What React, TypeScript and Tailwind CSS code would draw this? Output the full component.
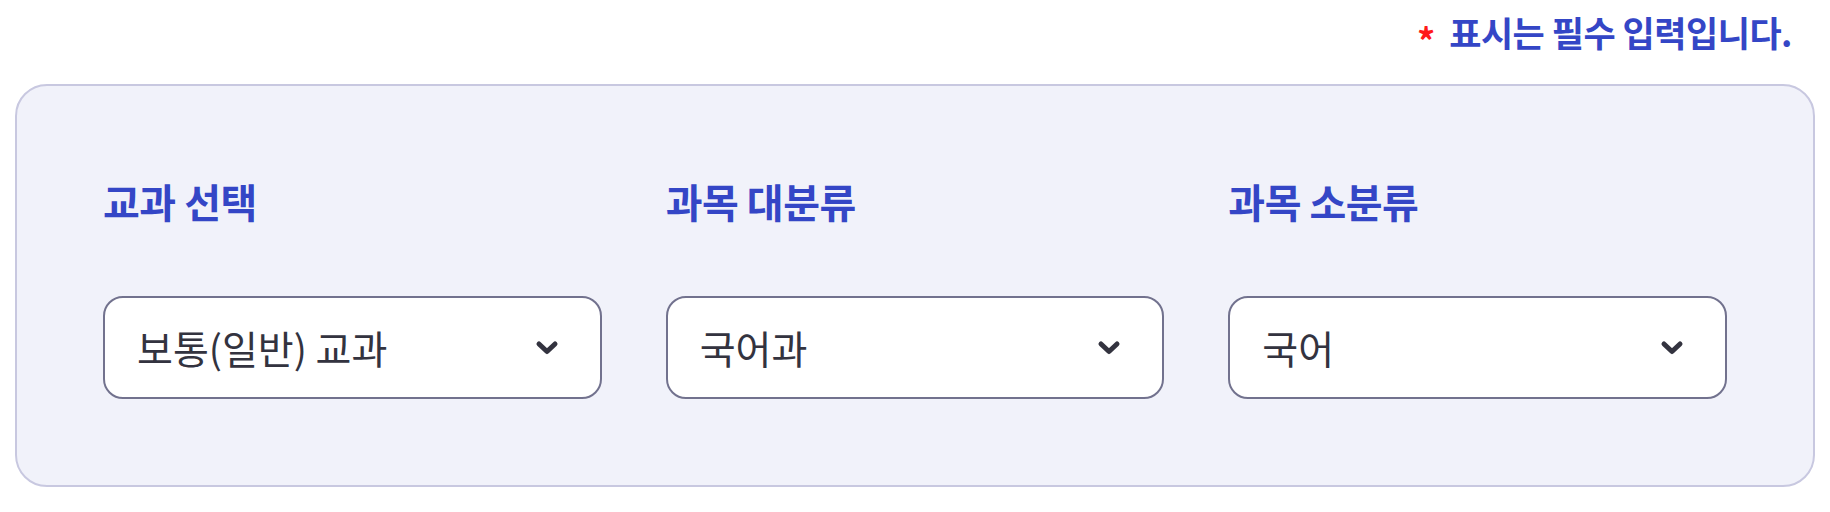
import React from "react";

const font = { fontFamily: '"Noto Sans CJK KR", "Noto Sans", sans-serif' };

function Chevron() {
  return (
    <svg width="24" height="16" viewBox="0 0 24 16" fill="none">
      <path d="M4 4 L12 11.5 L20 4" stroke="#33333f" strokeWidth="5" strokeLinecap="round" strokeLinejoin="round" />
    </svg>
  );
}

function Field({ label, value }: { label: string; value: string }) {
  return (
    <div className="flex flex-col">
      <div className="h-[40px] flex items-center text-[40px] font-bold text-[#3446c6] leading-none tracking-[-0.5px]">{label}</div>
      <div className="mt-[75px] h-[103px] rounded-[20px] border-2 border-[#72728e] bg-white flex items-center justify-between pl-[32px] pr-[41px]">
        <span className="text-[39px] text-[#33333f] leading-none">{value}</span>
        <Chevron />
      </div>
    </div>
  );
}

export default function App() {
  return (
    <div className="w-[1830px] h-[512px] bg-white" style={font}>
      <div className="h-[62px] flex items-center justify-end pr-[38px]">
        <span className="text-[#ff1a1a] text-[36px] font-bold leading-none mr-[14px] translate-y-[8px]">*</span>
        <span className="text-[35px] font-bold text-[#3446c6] leading-none tracking-[-0.5px]">표시는 필수 입력입니다.</span>
      </div>
      <div className="mt-[22px] mx-[15px] h-[403px] rounded-[32px] border-2 border-[#c8c8e0] bg-[#f1f2fa] px-[86px] pt-[95px]">
        <div className="grid grid-cols-3 gap-x-[64px]">
          <Field label="교과 선택" value="보통(일반) 교과" />
          <Field label="과목 대분류" value="국어과" />
          <Field label="과목 소분류" value="국어" />
        </div>
      </div>
    </div>
  );
}
